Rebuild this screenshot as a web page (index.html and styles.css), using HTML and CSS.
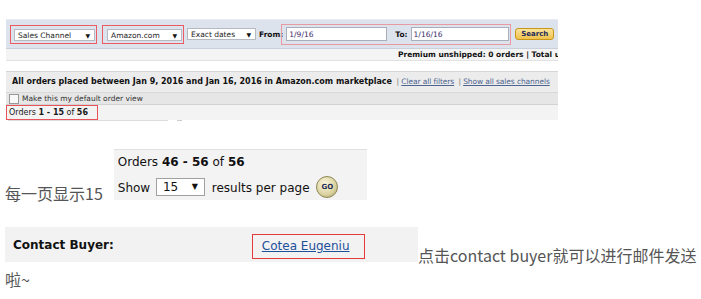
FILE: index.html
```html
<!DOCTYPE html>
<html lang="zh-CN">
<head>
  <meta charset="UTF-8" />
  <title>Manage Orders</title>
  <link rel="stylesheet" href="styles.css">
</head>
<body>
  <div class="post">

    <!-- screenshot 1: order filter -->
    <div class="shot shot-filter">
      <div class="filter-bar">
        <span class="mark mark-channel"><span class="select w-channel">Sales Channel<i>▼</i></span></span>
        <span class="mark mark-market"><span class="select w-market">Amazon.com<i>▼</i></span></span>
        <span class="select w-dates">Exact dates<i>▼</i></span>
        <b class="lbl lbl-from">From:</b>
        <span class="mark mark-range">
          <span class="field w-from">1/9/16</span>
          <b class="lbl lbl-to">To:</b>
          <span class="field w-to">1/16/16</span>
        </span>
        <span class="btn-search">Search</span>
      </div>
      <div class="filter-strip">Premium unshipped: 0 orders | Total unshipped: 0 orders</div>
      <div class="result-head">
        <div class="result-title">
          <b>All orders placed between Jan 9, 2016 and Jan 16, 2016 in Amazon.com marketplace</b>
          <span class="links"><span class="sep">|</span> <a href="#">Clear all filters</a>
          <span class="sep">|</span> <a href="#">Show all sales channels</a></span>
        </div>
        <div class="result-check"><span class="box"></span>Make this my default order view</div>
        <div class="result-count"><span class="mark-count">Orders <b>1 - 15</b> of <b>56</b></span></div>
        <div class="result-tail"><span class="tail-box"></span><span class="tail-dot"></span></div>
      </div>
    </div>

    <!-- screenshot 2: paging -->
    <p class="line line-paging">每一页显示15<span class="shot shot-paging">
        <span class="paging-row">Orders <b>46 - 56</b> of <b>56</b></span>
        <span class="paging-row">Show <span class="select w-show">15<i>▼</i></span> results per page <span class="btn-go">GO</span></span>
      </span></p>

    <!-- screenshot 3: contact buyer -->
    <p class="line line-contact"><span class="shot shot-contact">
        <b class="contact-label">Contact Buyer:</b>
        <span class="mark-buyer"><a href="#">Cotea Eugeniu</a></span>
      </span>点击contact buyer就可以进行邮件发送啦~</p>

  </div>
</body>
</html>
```

FILE: styles.css
```css
body {
  margin: 0;
  padding: 0 5px;
  background: #fff;
  font-family: "Noto Sans CJK SC", "Noto Sans", sans-serif;
  color: #555;
}

.post {
  width: 696px;
}

.line {
  margin: 0;
  font-size: 16px;
  line-height: 24px;
}

.shot {
  font-family: "DejaVu Sans", Verdana, sans-serif;
  color: #111;
}

.mark {
  display: inline-flex;
  align-items: center;
  border: 1px solid #ec5a62;
  box-sizing: border-box;
}

.select {
  position: relative;
  display: inline-flex;
  align-items: center;
  box-sizing: border-box;
  height: 12px;
  padding-left: 3px;
  background: #fff;
  border: 1px solid #b5b9c2;
  font-size: 7.5px;
  color: #222;
}

.select i {
  position: absolute;
  right: 4px;
  font-style: normal;
  font-size: 6px;
  color: #111;
}

/* ---- screenshot 1 ---- */
.shot-filter {
  width: 552px;
  margin: 19px 0 0 1px;
}

.filter-bar {
  display: flex;
  align-items: center;
  height: 28px;
  background: #dde3ed;
  border-top: 1px solid #e8ecf2;
  border-bottom: 1px solid #c9d0dc;
  padding-left: 4px;
  font-size: 7.5px;
}

.mark-channel {
  width: 87px;
  height: 19px;
  padding: 2px 1px 0 3px;
}

.mark-market {
  width: 82px;
  height: 19px;
  margin-left: 5px;
  padding: 2px 1px 0 4px;
}

.w-channel { width: 83px; }
.w-market { width: 77px; }
.w-dates { width: 69px; margin-left: 3px; }

.lbl {
  font-size: 7.5px;
  color: #111;
}

.lbl-from { margin-left: 3px; }

.mark-range {
  width: 230px;
  height: 21px;
  margin-left: -2px;
  padding-left: 4px;
  border-color: #e99aa0;
}

.field {
  display: inline-flex;
  align-items: center;
  box-sizing: border-box;
  height: 14px;
  padding-left: 2px;
  background: #fff;
  border: 1px solid #a9afba;
  font-size: 7.5px;
  color: #3a2a6a;
}

.w-from { width: 101px; }
.lbl-to { margin-left: 8px; }
.w-to { width: 98px; margin-left: 3px; }

.btn-search {
  display: inline-flex;
  align-items: center;
  justify-content: center;
  box-sizing: border-box;
  width: 39px;
  height: 12px;
  margin-left: 4px;
  background: linear-gradient(#fbe49a, #f0c14b);
  border: 1px solid #c8961a;
  border-radius: 3px;
  font-size: 7px;
  font-weight: bold;
  color: #1c2a5a;
}

.filter-strip {
  height: 11px;
  padding-left: 392px;
  background: #f4f4f4;
  border-bottom: 1px solid #e2e2e2;
  font-size: 7.5px;
  font-weight: bold;
  line-height: 11px;
  white-space: nowrap;
  overflow: hidden;
}

.result-head {
  margin-top: 10px;
  border-top: 1px solid #d6d6d6;
}

.result-title {
  height: 20px;
  padding-left: 6px;
  background: #ececec;
  font-size: 8px;
  line-height: 20px;
  white-space: nowrap;
  overflow: hidden;
}

.result-title .links {
  font-size: 7.5px;
  letter-spacing: -0.1px;
}

.result-title a {
  color: #4d6491;
}

.result-title .sep {
  color: #777;
  margin-left: 2px;
}

.result-check {
  display: flex;
  align-items: center;
  height: 11px;
  padding-left: 3px;
  background: #e6e6e6;
  border-top: 1px solid #d9d9d9;
  border-bottom: 1px solid #d2d2d2;
  font-size: 7.5px;
  color: #333;
}

.result-check .box {
  width: 8px;
  height: 8px;
  margin-right: 3px;
  background: #f8f8f8;
  border: 1px solid #999;
}

.result-count {
  display: flex;
  height: 15px;
  background: #f3f3f3;
}

.mark-count {
  box-sizing: border-box;
  width: 92px;
  height: 15px;
  padding-left: 2px;
  border: 1px solid #e8535b;
  font-size: 8px;
  line-height: 13px;
  color: #1a1a1a;
  white-space: nowrap;
}

.result-tail {
  display: flex;
  align-items: flex-start;
  height: 4px;
  padding-left: 2px;
}

.tail-box {
  width: 160px;
  height: 3px;
  border-top: 1px solid #ddd;
}

.tail-dot {
  width: 5px;
  height: 3px;
  margin-left: 9px;
  border-top: 1px solid #ccc;
}

/* ---- screenshot 2 ---- */
.line-paging {
  margin-top: 25px;
}

.shot-paging {
  display: inline-block;
  vertical-align: baseline;
  overflow: hidden;
  box-sizing: border-box;
  width: 253px;
  height: 51px;
  margin-left: 11px;
  padding: 2px 0 0 4px;
  background: #f3f3f3;
  border-top: 1px solid #e0e0e0;
  font-size: 12px;
  line-height: 20px;
}

.paging-row {
  display: block;
  white-space: nowrap;
}

.paging-row + .paging-row {
  margin-top: 6px;
}

.w-show {
  display: inline-block;
  vertical-align: middle;
  width: 49px;
  height: 18px;
  margin: -3px 3px 0 2px;
  padding-left: 6px;
  font-size: 12px;
  line-height: 16px;
  border-color: #a0a0a0;
  color: #111;
}

.w-show i {
  right: 6px;
  font-size: 8px;
}

.btn-go {
  display: inline-block;
  vertical-align: middle;
  box-sizing: border-box;
  width: 22px;
  height: 22px;
  margin: -3px 0 0 3px;
  border-radius: 50%;
  background: radial-gradient(circle at 40% 35%, #fbf8de, #d9d2a0 60%, #a89f63);
  border: 1px solid #8e8752;
  font-size: 7px;
  font-weight: bold;
  line-height: 20px;
  text-align: center;
  color: #1f2a55;
}

/* ---- screenshot 3 ---- */
.line-contact {
  margin-top: 22px;
}

.shot-contact {
  display: inline-block;
  vertical-align: baseline;
  overflow: hidden;
  box-sizing: border-box;
  width: 413px;
  height: 35px;
  padding: 7px 0 0 8px;
  background: #f2f2f2;
  font-size: 12px;
  line-height: 23px;
  white-space: nowrap;
}

.contact-label {
  display: inline-block;
  width: 235px;
  color: #111;
}

.mark-buyer {
  display: inline-block;
  box-sizing: border-box;
  width: 113px;
  height: 25px;
  padding-left: 9px;
  border: 1px solid #e63a3a;
  vertical-align: top;
}

.mark-buyer a {
  color: #1d4f9a;
}
```
